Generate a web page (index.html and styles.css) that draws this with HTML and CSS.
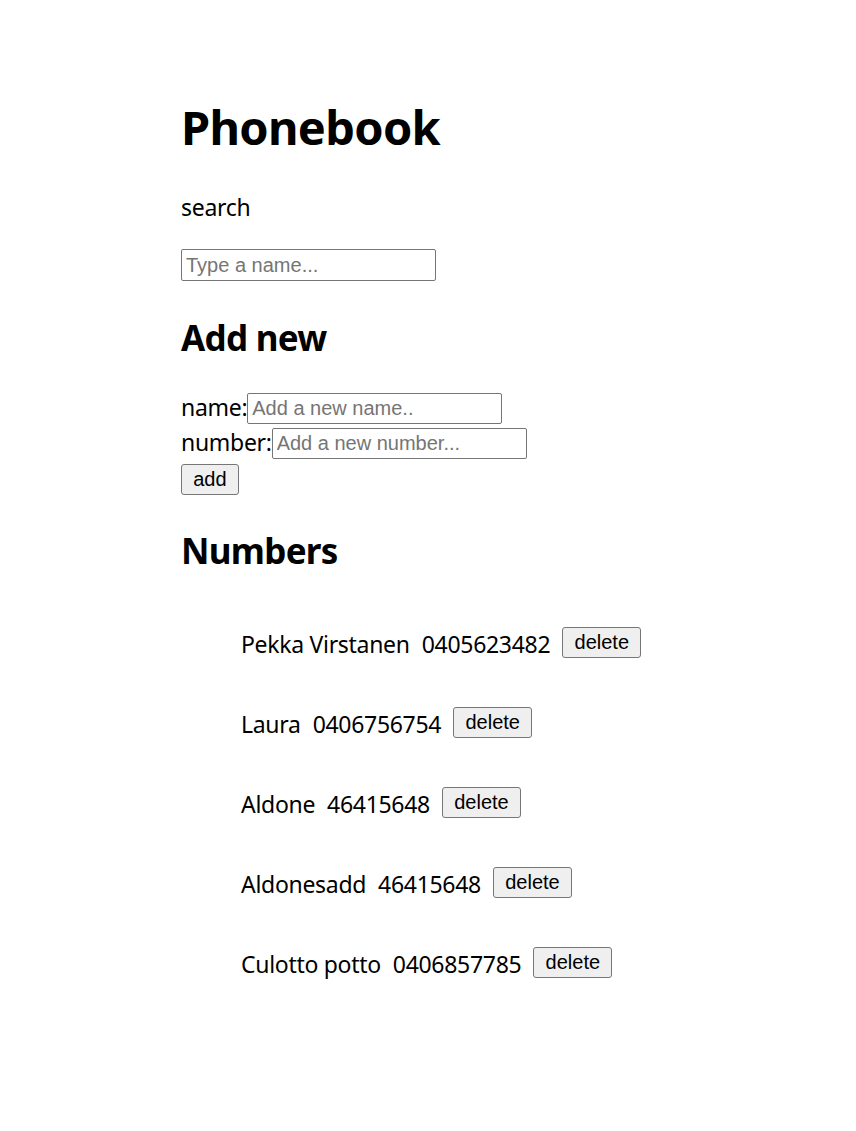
FILE: index.html
```html
<!DOCTYPE html>
<html lang="en">
<head>
<meta charset="utf-8">
<title>Phonebook</title>
<link rel="stylesheet" href="styles.css">
</head>
<body>
<div class="app">
  <h1 class="title">Phonebook</h1>
  <p class="search-label">search</p>
  <input class="field field-search" type="text" placeholder="Type a name...">
  <h2 class="subtitle subtitle-add">Add new</h2>
  <form class="form">
    <div class="row"><span class="label">name:</span><input class="field" type="text" placeholder="Add a new name.."></div>
    <div class="row"><span class="label">number:</span><input class="field" type="text" placeholder="Add a new number..."></div>
    <div class="row-btn"><button class="btn" type="button">add</button></div>
  </form>
  <h2 class="subtitle subtitle-numbers">Numbers</h2>
  <ul class="list">
    <li class="item"><span class="name">Pekka Virstanen</span><span class="number">0405623482</span><button class="btn btn-del" type="button">delete</button></li>
    <li class="item"><span class="name">Laura</span><span class="number">0406756754</span><button class="btn btn-del" type="button">delete</button></li>
    <li class="item"><span class="name">Aldone</span><span class="number">46415648</span><button class="btn btn-del" type="button">delete</button></li>
    <li class="item"><span class="name">Aldonesadd</span><span class="number">46415648</span><button class="btn btn-del" type="button">delete</button></li>
    <li class="item"><span class="name">Culotto potto</span><span class="number">0406857785</span><button class="btn btn-del" type="button">delete</button></li>
  </ul>
</div>
</body>
</html>
```

FILE: styles.css
```css
html, body {
  margin: 0;
  padding: 0;
  background: #ffffff;
}

body {
  font-family: "Noto Sans", "Open Sans", sans-serif;
  font-size: 23px;
  letter-spacing: -0.3px;
  color: #000000;
}

.app {
  padding: 99px 0 100px 181px;
}

.title {
  margin: 0;
  font-size: 47px;
  letter-spacing: -0.7px;
  line-height: 56px;
  font-weight: 700;
}

.search-label {
  margin: 36px 0 0 0;
  line-height: 32px;
}

.field {
  display: block;
  box-sizing: border-box;
  width: 255px;
  height: 31px;
  margin: 0;
  padding: 1px 4px;
  border: 1px solid #767676;
  border-radius: 2px;
  font-family: "Liberation Sans", Arial, sans-serif;
  font-size: 20px;
  letter-spacing: normal;
  color: #000000;
  background: #ffffff;
}

.field::placeholder {
  color: #757575;
}

.field-search {
  margin-top: 26px;
  height: 32px;
}

.subtitle {
  margin: 0;
  font-size: 35px;
  letter-spacing: -0.7px;
  line-height: 44px;
  font-weight: 700;
}

.subtitle-add {
  margin-top: 35px;
}

.form {
  margin: 31px 0 0 0;
}

.row {
  display: flex;
  align-items: flex-start;
  height: 35px;
}

.row .label {
  line-height: 32px;
}

.row .field {
  margin-top: 1.5px;
}

.row-btn {
  padding-top: 3px;
}

.btn {
  display: block;
  box-sizing: border-box;
  height: 31px;
  margin: 0;
  padding: 0 11.25px;
  border: 1px solid #767676;
  border-radius: 3px;
  background: #efefef;
  font-family: "Liberation Sans", Arial, sans-serif;
  font-size: 20px;
  letter-spacing: normal;
  line-height: 27px;
  color: #000000;
}

.subtitle-numbers {
  margin-top: 34px;
}

.list {
  list-style: none;
  margin: 55px 0 0 0;
  padding: 0 0 0 60px;
}

.item {
  display: flex;
  align-items: center;
  height: 32px;
  line-height: 32px;
}

.item + .item {
  margin-top: 48px;
}

.number {
  margin-left: 12px;
}

.btn-del {
  margin-left: 12px;
  margin-bottom: 3px;
}
```
